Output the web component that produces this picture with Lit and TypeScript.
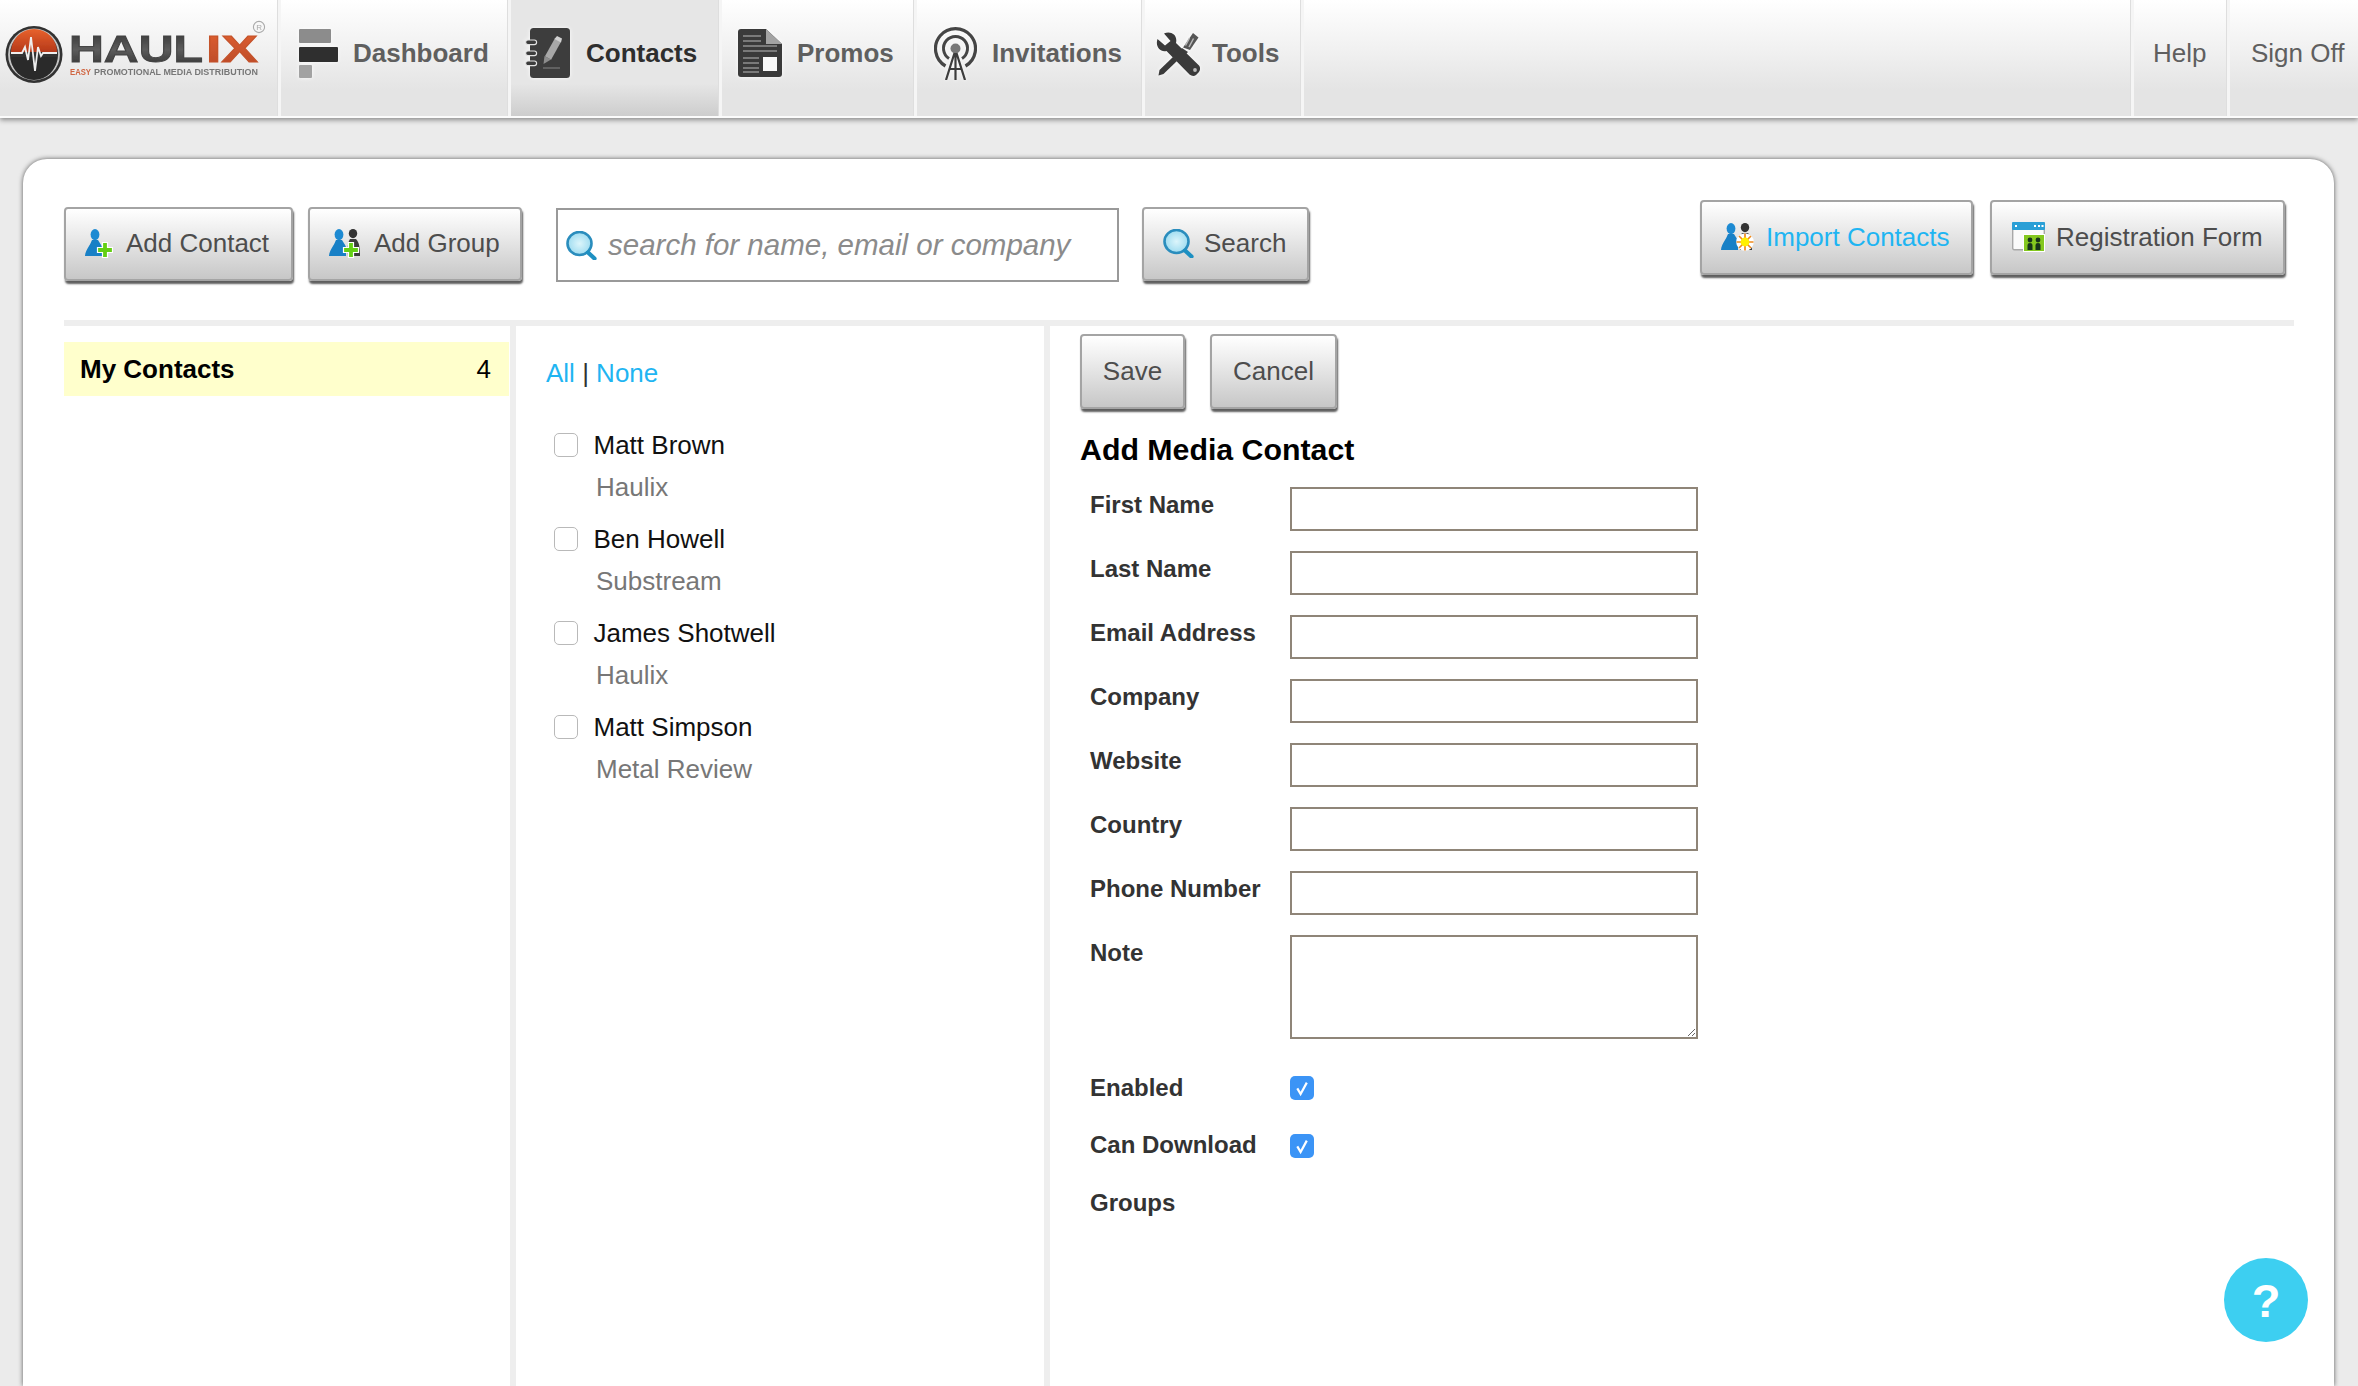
import { LitElement, html, css, svg } from "lit";
import { customElement } from "lit/decorators.js";

const FONT_STACK = css`"Liberation Sans", Arial, sans-serif`;

const logo = html`<svg width="278" height="116" viewBox="0 0 278 116">
  <defs>
    <filter id="lb" x="-5%" y="-5%" width="110%" height="110%"><feGaussianBlur stdDeviation="0.6"/></filter>
    <linearGradient id="lo" x1="0" y1="0" x2="0" y2="1"><stop offset="0" stop-color="#e8622c"/><stop offset="1" stop-color="#b5391a"/></linearGradient>
    <linearGradient id="ld" x1="0" y1="0" x2="0" y2="1"><stop offset="0" stop-color="#333"/><stop offset="0.5" stop-color="#5c5c5c"/><stop offset="1" stop-color="#2e2e2e"/></linearGradient>
    <linearGradient id="lx" x1="0" y1="0" x2="0" y2="1"><stop offset="0" stop-color="#e06030"/><stop offset="1" stop-color="#b8492a"/></linearGradient>
  </defs>
  <g filter="url(#lb)">
    <circle cx="34" cy="54.5" r="28.5" fill="#333"/>
    <circle cx="34" cy="54.5" r="25" fill="none" stroke="#c4c4c4" stroke-width="1.8"/>
    <path d="M11 52a23 23 0 0 1 46 0Z" fill="url(#lo)"/>
    <path d="M11 57a23 23 0 0 0 46 0Z" fill="#2c2c2c"/>
    <path d="M11 53H22L25 47L28 60L31 37L35 71L38 47L41 56L43 53H57" fill="none" stroke="#eee" stroke-width="1.8"/>
    <text class="lg" x="69" y="62" font-size="36" textLength="134" lengthAdjust="spacingAndGlyphs" fill="url(#ld)" stroke="#444" stroke-width="0.9">HAUL</text>
    <text class="lg" x="206" y="62" font-size="36" textLength="52" lengthAdjust="spacingAndGlyphs" fill="url(#lx)" stroke="#c4532b" stroke-width="0.9">IX</text>
    <text class="lg" x="70" y="74.5" font-size="9.5" textLength="21" lengthAdjust="spacingAndGlyphs" fill="#d0643f">EASY</text>
    <text class="lg" x="94" y="74.5" font-size="9.5" textLength="164" lengthAdjust="spacingAndGlyphs" fill="#777">PROMOTIONAL MEDIA DISTRIBUTION</text>
    <circle cx="259" cy="27" r="5.6" fill="none" stroke="#aaa" stroke-width="1.1"/>
    <text class="lr" x="256.2" y="30" font-size="8" fill="#aaa">R</text>
  </g>
</svg>`;

const iconDash = html`<svg class="glow" width="40" height="49" viewBox="0 0 40 49">
  <rect x="1" y="0" width="32" height="14" rx="1" fill="#8c8c8c"/>
  <rect x="1" y="18" width="39" height="15" rx="1" fill="#2f2f2f"/>
  <rect x="1" y="36" width="13" height="13" rx="1" fill="#a2a2a2"/>
</svg>`;

const iconContacts = html`<svg class="glow" width="45" height="52" viewBox="0 0 45 52">
  <rect x="5" y="1" width="40" height="50" rx="3.5" fill="#3d3d3d"/>
  <g fill="#3c3c3c" stroke="#e2e2e2" stroke-width="1.2">
    <rect x="0.6" y="13" width="11" height="4.6" rx="2.3"/>
    <rect x="0.6" y="24" width="11" height="4.6" rx="2.3"/>
    <rect x="0.6" y="34" width="11" height="4.6" rx="2.3"/>
  </g>
  <path d="M33 13L23 31" stroke="#a8a8a8" stroke-width="7"/>
  <path d="M19.5 29L26 32.5L18.5 37Z" fill="#8d8d8d"/>
  <path d="M32 9L37 11.5L36 15.5L29.5 12Z" fill="#d2d2d2"/>
  <path d="M18 41H35" stroke="#6b6b6b" stroke-width="1.6"/>
</svg>`;

const iconPromos = html`<svg class="glow" width="44" height="48" viewBox="0 0 44 48">
  <path d="M3 0H28L44 15V45a3 3 0 0 1-3 3H3a3 3 0 0 1-3-3V3a3 3 0 0 1 3-3Z" fill="#3a3a3a"/>
  <path d="M28 0V15H44Z" fill="#a3a3a3"/>
  <g stroke="#7a7a7a" stroke-width="1.8">
    <path d="M5 7H23M5 12H23M5 17H39M5 22H39M5 29H21M5 34H21M5 39H21M5 43H21"/>
  </g>
  <rect x="25" y="28" width="14" height="14" fill="#f8f8f8"/>
</svg>`;

const iconInvite = html`<svg class="glow" width="43" height="53" viewBox="0 0 43 53">
  <g fill="none" stroke="#454545">
    <path d="M11.5 39A20 20 0 1 1 31.5 39" stroke-width="3.2"/>
    <path d="M15 31.5A12 12 0 1 1 28 31.5" stroke-width="3"/>
  </g>
  <circle cx="21.5" cy="21.5" r="5" fill="#777"/>
  <path d="M21.5 26V53M20.5 26L12 53M22.5 26L31 53M15.5 42H27.5" fill="none" stroke="#3c3c3c" stroke-width="2.2"/>
</svg>`;

const iconTools = html`<svg class="glow" width="44" height="45" viewBox="0 0 44 45">
  <path d="M37 2L42.5 6.5L34 19L27 16.5Z" fill="#565656"/>
  <path d="M33.5 7L29.5 14.5M37.5 7.5L33 16" stroke="#b8b8b8" stroke-width="1.5"/>
  <path d="M26 17L32 21L28 25L23 21Z" fill="#3e3e3e"/>
  <path d="M17 26L21 30L7.5 43L2.5 44.5L3.5 39Z" fill="#3a3a3a"/>
  <path d="M1.5 8L9 14.5L14.5 10L8 2.5C14 -0.5 22 3 20 12L43 34.5C44.5 36.5 44.5 39.5 42.5 41.5L40 44C38 45.5 35.5 45 33.5 43.5L10.5 20C4 21.5 -1 15.5 1.5 8Z" fill="#3a3a3a"/>
  <circle cx="39" cy="39" r="1.9" fill="#bbb"/>
</svg>`;

const blue = (tx: number, s = 1) => svg`
  <g transform="translate(${tx} 0) scale(${s})">
    <ellipse cx="10" cy="5.6" rx="4.4" ry="5.6" fill="#1d8ad2"/>
    <path d="M0 27C0 24 2 20 4 17C5.5 15 6 13 7 11H13C14 13 16 15 17 18V27Z" fill="#1880c6"/>
  </g>`;
const dark = (tx: number) => svg`
  <g transform="translate(${tx} 0)">
    <ellipse cx="7" cy="4.6" rx="4.2" ry="4.6" fill="#333"/>
    <path d="M2 27C1 18 2 13 4 10H10C13 13 14 18 14 27Z" fill="#3b3b3b"/>
  </g>`;
const plus = (cx: number, cy: number) => svg`
  <path d="M${cx - 2.5} ${cy - 7.5}h5v5h5v5h-5v5h-5v-5h-5v-5h5Z" fill="#63cf14" stroke="#fff" stroke-width="1.2"/>`;

const iconAddContact = html`<svg width="28" height="29" viewBox="0 0 28 29">${blue(0)}${plus(20, 21)}</svg>`;
const iconAddGroup = html`<svg width="33" height="29" viewBox="0 0 33 29">${dark(17)}${blue(0)}${plus(22, 21)}</svg>`;
const iconImport = html`<svg width="33" height="28" viewBox="0 0 33 28">
  ${dark(17)}${blue(0, 1)}
  <circle cx="24" cy="19" r="8.8" fill="#fff"/>
  <g stroke="#f08a1c" stroke-width="1.7"><path d="M24 10.5V27.5M15.5 19H32.5M18 13L30 25M30 13L18 25"/></g>
  <circle cx="24" cy="19" r="4.4" fill="#fff000"/>
</svg>`;
const iconReg = html`<svg width="33" height="30" viewBox="0 0 33 30">
  <rect x="0.7" y="0.7" width="31.6" height="27" rx="1.5" fill="#fafafa" stroke="#a8a8a8" stroke-width="1.4"/>
  <rect x="0" y="0" width="33" height="8" rx="1" fill="#2a9fd6"/>
  <path d="M3 4h2M22 4h2M26 4h2M29.5 4h2" stroke="#fff" stroke-width="2"/>
  <rect x="11" y="12" width="22" height="18" fill="#fff"/>
  <rect x="12" y="13" width="20" height="16" fill="#84c81f"/>
  <g fill="#17351a">
    <circle cx="18" cy="18" r="2.4"/><path d="M15.5 28V23q0-2 2.5-2t2.5 2V28Z"/>
    <circle cx="26" cy="18" r="2.4"/><path d="M23.5 28V23q0-2 2.5-2t2.5 2V28Z"/>
  </g>
</svg>`;
const iconSearch = html`<svg width="31" height="29" viewBox="0 0 31 29">
  <defs><radialGradient id="sg"><stop offset="0" stop-color="#dcf5fb"/><stop offset="1" stop-color="#9fdcf0"/></radialGradient></defs>
  <ellipse cx="13.5" cy="12.5" rx="12" ry="11.5" fill="url(#sg)" stroke="#2a8dbd" stroke-width="2.6"/>
  <path d="M22 21.5L28.5 27.5" stroke="#1d90c2" stroke-width="4.2" stroke-linecap="round"/>
</svg>`;
const iconCheck = html`<svg width="24" height="24" viewBox="0 0 24 24">
  <path d="M7.3 12.4L10.6 18L16.8 6.6" fill="none" stroke="#fff" stroke-width="2.2"/>
</svg>`;

const contacts = [
  { name: "Matt Brown", company: "Haulix" },
  { name: "Ben Howell", company: "Substream" },
  { name: "James Shotwell", company: "Haulix" },
  { name: "Matt Simpson", company: "Metal Review" },
];

const fields = ["First Name", "Last Name", "Email Address", "Company", "Website", "Country", "Phone Number"];

@customElement("app-root")
export class AppRoot extends LitElement {
  static styles = css`
    :host {
      display: flex;
      flex-direction: column;
      height: 1386px;
      overflow: hidden;
      background: #ebebeb;
      font-family: ${FONT_STACK};
      color: #000;
      position: relative;
    }
    .lg { font-family: ${FONT_STACK}; font-weight: 700; }
    .lr { font-family: ${FONT_STACK}; }

    header {
      flex: none;
      height: 116px;
      display: flex;
      background: linear-gradient(180deg, #fff 0%, #f1f1f1 42%, #e4e4e4 78%, #e4e4e4 100%);
      border-bottom: 2px solid #fbfbfb;
      box-shadow: 0 2px 5px rgba(0, 0, 0, 0.42);
      position: relative;
      z-index: 1;
    }
    .brand { flex: none; width: 278px; }
    .sep { flex: none; width: 3px; background: #f5f5f5; box-shadow: -1px 0 0 #dedede; }
    .tab {
      flex: none;
      display: flex;
      align-items: center;
      box-sizing: border-box;
      padding-bottom: 10px;
      font-size: 26px;
      font-weight: 700;
      color: #5f5f5f;
      white-space: nowrap;
    }
    .glow { flex: none; filter: drop-shadow(0 0 2px rgba(255, 255, 255, 0.9)); }
    .dash { width: 227px; padding-left: 17px; gap: 15px; }
    .cont {
      width: 208px;
      padding-left: 14px;
      gap: 16px;
      color: #2e2e2e;
      background: linear-gradient(180deg, #e6e6e6 0%, #e6e6e6 72%, #cdcdcd 100%);
    }
    .prom { width: 192px; padding-left: 16px; gap: 15px; }
    .invi { width: 225px; padding-left: 17px; gap: 15px; }
    .tool { width: 156px; padding-left: 11px; gap: 12px; }
    .fill { flex: 1; }
    .plain { font-weight: 400; }
    .help { width: 93px; padding-left: 19px; }
    .sign { width: 128px; padding-left: 21px; }

    main {
      flex: 1;
      min-height: 0;
      padding: 41px 24px 0 23px;
    }
    .panel {
      box-sizing: border-box;
      height: 100%;
      background: #fff;
      border-radius: 24px 24px 0 0;
      box-shadow: 0 0 5px rgba(0, 0, 0, 0.62);
      padding: 0 40px 0 41px;
      display: flex;
      flex-direction: column;
    }
    .toolbar {
      flex: none;
      height: 167px;
      box-sizing: border-box;
      padding: 41px 9px 0 0;
      display: flex;
      align-items: flex-start;
      border-bottom: 6px solid #eeeeee;
    }
    .tool-left {
      display: flex;
      align-items: flex-start;
      margin-top: 7px;
    }
    .tool-right {
      display: flex;
      align-items: flex-start;
      gap: 17px;
      margin-left: auto;
    }
    .btn {
      box-sizing: border-box;
      height: 74px;
      flex: none;
      display: flex;
      align-items: center;
      padding-bottom: 1px;
      font-size: 26px;
      color: #4d4d4d;
      white-space: nowrap;
      background: linear-gradient(180deg, #ffffff 0%, #ececec 35%, #c7c7c7 100%);
      border: 2px solid #a4a4a4;
      border-radius: 4px;
      box-shadow: 1px 3px 2px #5e5e5e;
    }
    .b-contact { width: 229px; padding-left: 19px; gap: 13px; }
    .b-group { width: 214px; padding-left: 19px; gap: 12px; margin-left: 15px; }
    .b-search { width: 167px; padding-left: 19px; gap: 10px; margin-left: 23px; }
    .b-import { width: 273px; padding-left: 19px; gap: 12px; height: 75px; color: #1fb5f2; }
    .b-reg { width: 295px; padding-left: 20px; gap: 11px; height: 75px; }
    .b-save { width: 105px; height: 75px; justify-content: center; }
    .b-cancel { width: 127px; height: 75px; justify-content: center; margin-left: 25px; }

    .searchbox {
      flex: none;
      box-sizing: border-box;
      width: 563px;
      height: 74px;
      margin: 1px 0 0 34px;
      border: 2px solid #999;
      display: flex;
      align-items: center;
      padding-left: 8px;
      gap: 11px;
      background: #fff;
      font-size: 29.5px;
      font-style: italic;
      color: #8b8b8b;
      white-space: nowrap;
    }

    .columns { flex: 1; min-height: 0; display: flex; }
    .col-groups { flex: none; width: 446px; padding-top: 16px; box-sizing: border-box; }
    .group-row {
      height: 54px;
      width: 445px;
      box-sizing: border-box;
      background: #ffffcc;
      display: flex;
      align-items: center;
      justify-content: space-between;
      padding: 0 18px 0 16px;
      font-size: 26px;
      font-weight: 400;
    }
    .group-row b { font-weight: 700; }

    .col-list {
      flex: none;
      box-sizing: border-box;
      width: 540px;
      padding: 27px 0 0 30px;
      border-left: 6px solid #eeeeee;
      border-right: 6px solid #eeeeee;
    }
    .allnone { font-size: 26px; line-height: 40px; height: 40px; margin-bottom: 31px; color: #333; }
    .allnone a { color: #1fb5f2; text-decoration: none; }
    .person { height: 84px; margin-bottom: 10px; font-size: 26px; line-height: 42px; }
    .person-name { display: flex; align-items: center; gap: 15.5px; padding-left: 8px; color: #111; }
    .box {
      flex: none;
      box-sizing: border-box;
      width: 24px;
      height: 24px;
      margin: 0;
      appearance: none;
      background: #fff;
      border: 1.5px solid #b9b9b9;
      border-radius: 5px;
    }
    .person-co { padding-left: 50px; color: #777; }

    .col-form { flex: 1; min-width: 0; padding: 8px 0 0 30px; }
    .actions { display: flex; }
    h2 {
      margin: 21px 0 17px;
      font-size: 30.3px;
      line-height: 40px;
      font-weight: 700;
      color: #000;
    }
    .row { display: flex; margin-bottom: 20px; padding-left: 10px; }
    .row label {
      flex: none;
      width: 200px;
      padding-top: 1px;
      font-size: 24px;
      font-weight: 700;
      line-height: 34px;
      color: #333;
      white-space: nowrap;
    }
    input.text, textarea {
      box-sizing: border-box;
      width: 408px;
      height: 44px;
      margin: 0;
      padding: 0;
      border: 2px solid #8f8578;
      border-radius: 0;
      background: #fff;
      display: block;
      outline: none;
    }
    textarea { height: 104px; resize: both; }
    .note { margin-bottom: 31px; }
    .check-row { margin-bottom: 23px; height: 34px; }
    .check-row.first .tick { margin-top: 6px; }
    .check-row.last { margin-bottom: 24px; }
    .tick {
      width: 24px;
      height: 24px;
      margin-top: 7px;
      border-radius: 5px;
      background: #3b94f6;
      display: block;
    }
    .tick svg { display: block; }

    .fab {
      position: absolute;
      left: 2224px;
      top: 1258px;
      width: 84px;
      height: 84px;
      border-radius: 50%;
      background: #3dcff1;
      color: #fff;
      font-size: 47px;
      font-weight: 700;
      display: flex;
      align-items: center;
      justify-content: center;
    }
  `;

  render() {
    return html`
      <header>
        <div class="brand">${logo}</div><span class="sep"></span>
        <div class="tab dash">${iconDash}<span>Dashboard</span></div><span class="sep"></span>
        <div class="tab cont">${iconContacts}<span>Contacts</span></div><span class="sep"></span>
        <div class="tab prom">${iconPromos}<span>Promos</span></div><span class="sep"></span>
        <div class="tab invi">${iconInvite}<span>Invitations</span></div><span class="sep"></span>
        <div class="tab tool">${iconTools}<span>Tools</span></div><span class="sep"></span>
        <div class="fill"></div><span class="sep"></span>
        <div class="tab plain help">Help</div><span class="sep"></span>
        <div class="tab plain sign">Sign Off</div>
      </header>
      <main>
        <section class="panel">
          <div class="toolbar">
            <div class="tool-left">
              <div class="btn b-contact">${iconAddContact}<span>Add Contact</span></div>
              <div class="btn b-group">${iconAddGroup}<span>Add Group</span></div>
              <div class="searchbox">${iconSearch}<span>search for name, email or company</span></div>
              <div class="btn b-search">${iconSearch}<span>Search</span></div>
            </div>
            <div class="tool-right">
              <div class="btn b-import">${iconImport}<span>Import Contacts</span></div>
              <div class="btn b-reg">${iconReg}<span>Registration Form</span></div>
            </div>
          </div>
          <div class="columns">
            <div class="col-groups">
              <div class="group-row"><b>My Contacts</b><span>4</span></div>
            </div>
            <div class="col-list">
              <div class="allnone"><a>All</a> | <a>None</a></div>
              ${contacts.map(
                (c) => html`<div class="person">
                  <div class="person-name"><input class="box" type="checkbox" /><span>${c.name}</span></div>
                  <div class="person-co">${c.company}</div>
                </div>`
              )}
            </div>
            <div class="col-form">
              <div class="actions">
                <div class="btn b-save">Save</div>
                <div class="btn b-cancel">Cancel</div>
              </div>
              <h2>Add Media Contact</h2>
              ${fields.map(
                (f) => html`<div class="row"><label>${f}</label><input class="text" type="text" /></div>`
              )}
              <div class="row note"><label>Note</label><textarea></textarea></div>
              <div class="row check-row first"><label>Enabled</label><span class="tick">${iconCheck}</span></div>
              <div class="row check-row last"><label>Can Download</label><span class="tick">${iconCheck}</span></div>
              <div class="row check-row"><label>Groups</label></div>
            </div>
          </div>
        </section>
      </main>
      <div class="fab">?</div>
    `;
  }
}
